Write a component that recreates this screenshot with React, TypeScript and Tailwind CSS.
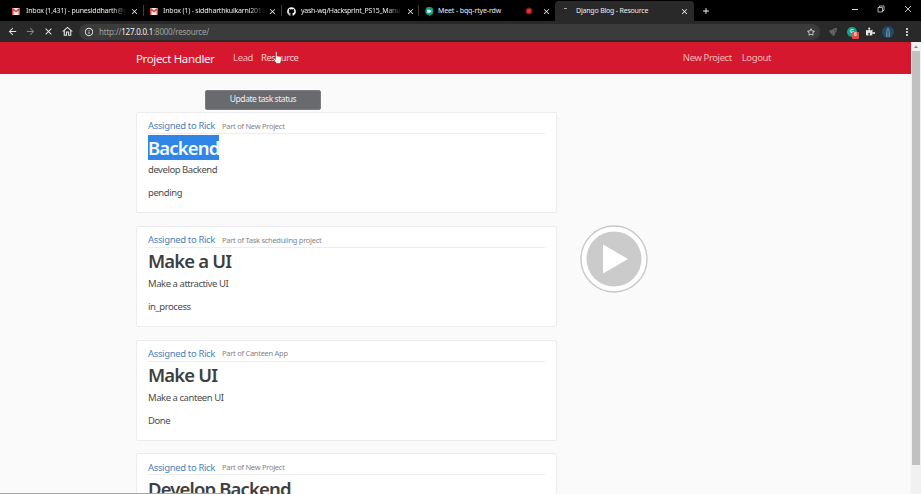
import React from "react";
import {
  FaGithub,
  FaPuzzlePiece,
  FaRocket,
  FaRegStar,
} from "react-icons/fa";
import {
  MdArrowBack,
  MdArrowForward,
  MdClose,
  MdAdd,
  MdMoreVert,
  MdInfoOutline,
  MdOutlineHome,
} from "react-icons/md";

function GmailIcon() {
  return (
    <svg viewBox="0 0 16 14" className="h-[7px] w-2 shrink-0">
      <rect width="16" height="14" rx="1" fill="#f4eeee" />
      <path d="M0 1v13h3V5l5 4 5-4v9h3V1l-2-1-6 5-6-5z" fill="#d8493c" />
    </svg>
  );
}

function MeetIcon() {
  return (
    <svg viewBox="0 0 16 16" className="size-[9px] shrink-0">
      <path d="M8 0a7 7 0 0 0-1 14v2c4-1 8-4 8-9a7 7 0 0 0-7-7z" fill="#159b7c" />
      <path d="M4 5h5v1.500l2-1.500v5l-2-1.500V10H4z" fill="#e8fff8" />
    </svg>
  );
}

function RecordIcon() {
  return (
    <svg viewBox="0 0 16 16" className="ml-auto size-[8px] shrink-0">
      <circle cx="8" cy="8" r="7" fill="#7d1717" />
      <circle cx="8" cy="8" r="4.500" fill="#e53030" />
    </svg>
  );
}

function Close() {
  return <MdClose className="size-[9px] shrink-0 text-[#f0f0f0]" />;
}

const fade = "[mask-image:linear-gradient(to_right,black_85%,transparent)]";

function Tabs() {
  return (
    <div className="relative flex h-[21px] items-center bg-black text-[7px] text-[#ededed]">
      <div className="flex w-[143px] items-center pl-3 pt-px">
        <GmailIcon />
        <span className={"ml-[6px] w-[101px] whitespace-nowrap tracking-[-0.200px] " + fade}>
          Inbox (1,431) - punesiddharth@g
        </span>
        <span className="ml-[3px] flex"><Close /></span>
      </div>
      <div className="flex w-[138px] items-center border-l border-[#3c3c3c] pl-[6px] pt-px">
        <GmailIcon />
        <span className={"ml-[5px] w-[102px] whitespace-nowrap tracking-[-0.200px] " + fade}>
          Inbox (1) - siddharthkulkarni2019
        </span>
        <span className="ml-[3px] flex"><Close /></span>
      </div>
      <div className="flex w-[137px] items-center border-l border-[#3c3c3c] pl-[5px] pt-px">
        <FaGithub className="size-[9px] shrink-0 text-white" />
        <span className={"ml-[5px] w-[101px] whitespace-nowrap tracking-[-0.260px] " + fade}>
          yash-wq/Hacksprint_PS15_Manu
        </span>
        <span className="ml-[4px] flex"><Close /></span>
      </div>
      <div className="flex w-[137px] items-center border-l border-[#3c3c3c] pl-[6px] pr-[4px] pt-px">
        <MeetIcon />
        <span className="ml-[4px] whitespace-nowrap tracking-[-0.130px]">Meet - bqq-rtye-rdw</span>
        <RecordIcon />
        <span className="ml-[9px] flex"><Close /></span>
      </div>
      <div className="flex h-[20px] w-[139px] items-center self-end rounded-t-[4px] bg-[#292929] pl-[9px]">
        <span className="mb-1.5 h-px w-[3px] bg-[#aaa]" />
        <span className="ml-[9px] w-[100px] whitespace-nowrap tracking-[-0.200px]">Django Blog - Resource</span>
        <span className="ml-[4px] flex"><Close /></span>
      </div>
      <MdAdd className="ml-[7px] size-[10px] text-white" />
      <div className="mb-[3px] ml-auto flex items-center gap-[19px] pr-[9px] text-[#d8d8d8]">
        <span className="h-px w-[6px] bg-[#d8d8d8]" />
        <svg viewBox="0 0 8 8" className="size-[8px]" fill="none" stroke="currentColor" strokeWidth="0.8">
          <path d="M1 2.500h4.500V7H1zM2.500 2.500V1H7v4.500H5.500" />
        </svg>
        <svg viewBox="0 0 8 8" className="size-[8px]" fill="none" stroke="currentColor" strokeWidth="0.9">
          <path d="M1 1l6 6M7 1L1 7" />
        </svg>
      </div>
    </div>
  );
}

function Toolbar() {
  return (
    <div className="flex h-[21px] items-center bg-[#292929] pl-[7px] text-[#e8e8e8]">
      <MdArrowBack className="size-[11px]" />
      <MdArrowForward className="ml-[7px] size-[11px] text-[#858585]" />
      <MdClose className="ml-[7px] size-[11px]" />
      <MdOutlineHome className="ml-[7px] size-[13px]" />
      <div className="ml-[5px] flex h-[16px] w-[741px] items-center rounded-full bg-[#3b3b3b] px-[5px]">
        <MdInfoOutline className="size-[10px]" />
        <span className="ml-[5px] text-[8px] tracking-[-0.220px] text-[#a0a0a0]">
          http://<span className="text-[#f2f2f2]">127.0.0.1</span>:8000/resource/
        </span>
        <FaRegStar className="ml-auto size-[8px]" />
      </div>
      <FaRocket className="ml-[9px] size-[8px] text-[#626262]" />
      <div className="relative ml-[10px] flex size-[10px] items-center justify-center rounded-full bg-[#12a58b] text-[6px] font-bold">
        G
        <span className="absolute left-[5px] top-[5px] flex h-[7px] w-[7px] items-center justify-center rounded-[1px] bg-[#e24a4a] text-[5px]">6</span>
      </div>
      <FaPuzzlePiece className="ml-[9px] size-[9px]" />
      <svg viewBox="0 0 12 12" className="ml-[7px] size-[12px]">
        <circle cx="6" cy="6" r="6" fill="#214b66" />
        <path d="M4 11c0-4 0-8 2-9 2 1 2 5 2 9z" fill="#648ca3" />
        <path d="M6 4v7" stroke="#16334a" strokeWidth=".8" />
      </svg>
      <MdMoreVert className="ml-[7px] size-[12px]" />
    </div>
  );
}

function HandCursor() {
  return (
    <svg viewBox="0 0 9 13" className="absolute left-[273px] top-[9px] h-[13px] w-[9px]">
      <path
        d="M2.500 1.200c0-1 1.500-1 1.500 0V5l3.500.8c.8.200 1 .7 1 1.400L8 10.500 7 12.500H3.500L.7 8.500c-.4-.8.500-1.400 1.100-.8l.7.700z"
        fill="#fff4ee"
        stroke="#6f2a2a"
        strokeWidth=".5"
      />
    </svg>
  );
}

function Navbar() {
  return (
    <nav className="relative flex h-8 items-center bg-[#d6182f] pl-[136px] pr-[140px] pt-px text-[9.500px] text-[#f5b5b8]">
      <span className="w-[97px] whitespace-nowrap text-[11.500px] tracking-[-0.360px] text-[#ffeeee]">Project Handler</span>
      <span className="w-[28px] whitespace-nowrap tracking-[-0.350px]">Lead</span>
      <span className="text-[#f9cfd0] tracking-[-0.450px]">Resource</span>
      <span className="ml-auto tracking-[-0.400px]">New Project</span>
      <span className="ml-[10px] tracking-[-0.400px]">Logout</span>
      <HandCursor />
    </nav>
  );
}

type Task = {
  project: string;
  title: string;
  text: string;
  status: string;
  selected?: boolean;
};

const tasks: Task[] = [
  { project: "New Project", title: "Backend", text: "develop Backend", status: "pending", selected: true },
  { project: "Task scheduling project", title: "Make a UI", text: "Make a attractive UI", status: "in_process" },
  { project: "Canteen App", title: "Make UI", text: "Make a canteen UI", status: "Done" },
  { project: "New Project", title: "Develop Backend", text: "develop Backend", status: "pending" },
];

function TaskCard({ task }: { task: Task }) {
  return (
    <article className="h-[101px] w-[421px] shrink-0 rounded-[2px] border border-[#ececee] bg-white px-[11px] pt-[7px] text-[9.500px] text-[#4c4c4e]">
      <div className="flex h-[14px] items-center border-b border-[#ededef] whitespace-nowrap">
        <span className="w-[74px] text-[#4b82bd] tracking-[-0.350px]">Assigned to Rick</span>
        <span className="text-[7.500px] tracking-[-0.270px] text-[#858588]">Part of {task.project}</span>
      </div>
      <h2 className="flex h-[26px] items-center text-[18.500px] font-semibold leading-[25px] tracking-[-0.850px] text-[#3f3f42]">
        <span className={task.selected ? "bg-[#2f86e6] text-[#f3faff]" : ""}>{task.title}</span>
      </h2>
      <p className="mt-[3px] h-[14px] leading-[14px] tracking-[-0.450px]">{task.text}</p>
      <p className="mt-[9px] h-[14px] leading-[14px] tracking-[-0.420px]">{task.status}</p>
    </article>
  );
}

function PlayButton() {
  return (
    <svg viewBox="0 0 68 68" className="absolute left-[580px] top-[225px] size-[68px]">
      <circle cx="34" cy="34" r="33" fill="#fff" stroke="#c9c9c9" strokeWidth="1.400" />
      <circle cx="34" cy="34" r="27.500" fill="#cbcbcb" />
      <path d="M23 19.500v29L48 34z" fill="#fff" />
    </svg>
  );
}

export default function App() {
  return (
    <div className="relative flex h-[494px] w-[921px] flex-col overflow-hidden font-['Noto_Sans','Open_Sans',sans-serif]">
      <Tabs />
      <Toolbar />
      <div className="flex min-h-0 flex-1">
        <div className="flex w-[911px] flex-col bg-[#fafafb]">
          <Navbar />
          <main className="flex min-h-0 flex-1 flex-col overflow-hidden pl-[136px] pt-4">
            <button className="ml-[69px] flex h-[20px] w-[116px] shrink-0 items-center justify-center rounded-[2px] border border-[#7b7d80] bg-[#686a6d] pb-[2px] text-[8.500px] tracking-[-0.450px] text-[#efefef]">
              Update task status
            </button>
            <div className="mt-[2px] flex flex-col gap-[12.800px]">
              {tasks.map((task, i) => (
                <TaskCard key={i} task={task} />
              ))}
            </div>
          </main>
        </div>
        <div className="flex w-[10px] flex-col items-center bg-[#f1f1f1]">
          <svg viewBox="0 0 10 9" className="h-[9px] w-[10px]">
            <path d="M3 6l2-2.500L7 6z" fill="#858585" />
          </svg>
          <div className="h-[414px] w-[8px] bg-[#c1c1c1]" />
        </div>
      </div>
      <PlayButton />
      <div className="absolute bottom-0 left-0 h-px w-[225px] bg-[#a4a7a5]" />
    </div>
  );
}
